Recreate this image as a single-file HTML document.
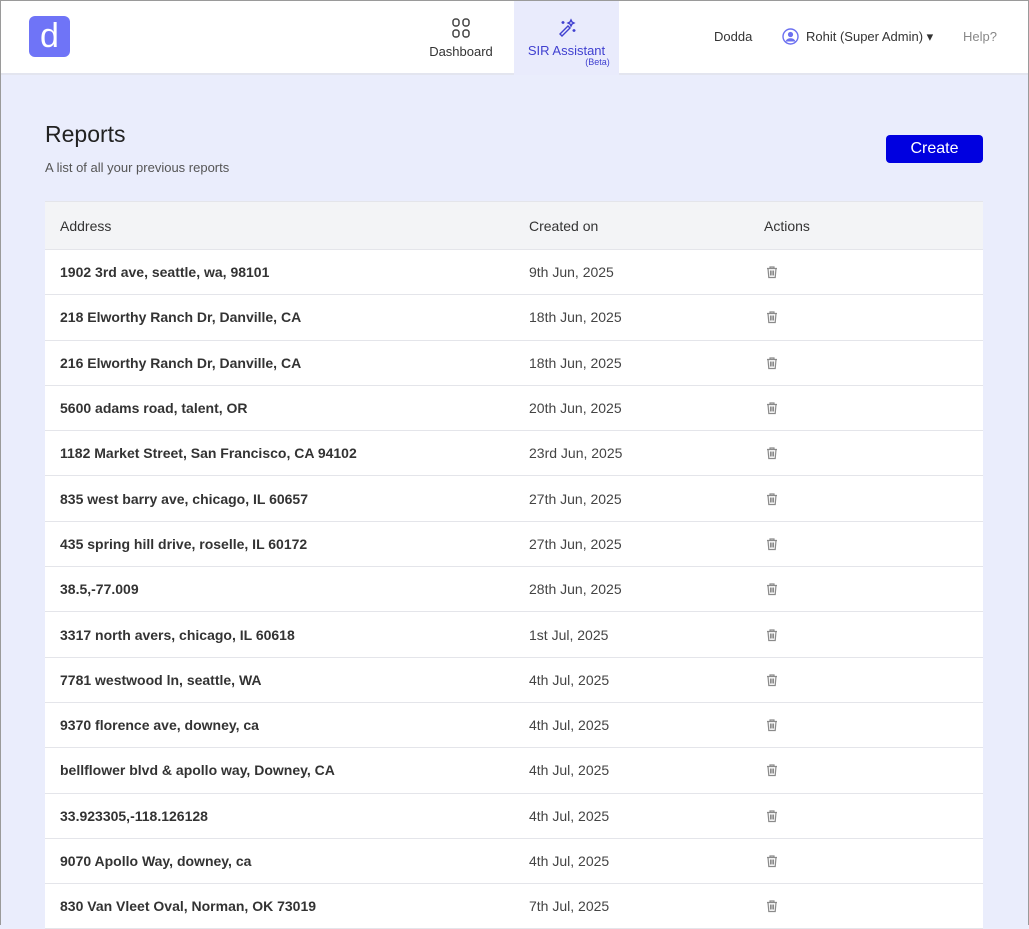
<!DOCTYPE html>
<html><head><meta charset="utf-8"><style>
*{box-sizing:border-box;margin:0;padding:0}
body{width:1029px;height:925px;overflow:hidden;background:#eaedfc;font-family:"Liberation Sans",sans-serif;color:#2a2a2a;position:relative}
.frame{position:absolute;inset:0;border:1px solid #9a9a9a;border-bottom:none;pointer-events:none;z-index:9}
.nav{position:absolute;left:0;top:0;width:1029px;height:75px;background:#fff;border-bottom:2px solid #e3e5ef}
.logo{position:absolute;left:29px;top:16px;width:41px;height:41px;background:#6f74f7;border-radius:6px;color:#fff;font-size:34px;text-align:center;line-height:40px}
.tab{position:absolute;top:0;height:75px;text-align:center;font-size:13px}
.r{position:absolute;top:29px;font-size:13px}
h1{position:absolute;left:45px;top:121px;font-size:23px;font-weight:normal;color:#222}
.sub{position:absolute;left:45px;top:160px;font-size:13px;color:#555}
.btn{position:absolute;left:886px;top:135px;width:97px;height:28px;background:#0000e0;border-radius:4px;color:#fff;font-size:16px;text-align:center;line-height:28px}
table{position:absolute;left:45px;top:201px;width:938px;border-collapse:collapse;font-size:14px;table-layout:fixed}
th{height:48px;background:#f3f4f6;text-align:left;font-weight:normal;color:#333;border:1px solid #e4e5ea;border-left:none;border-right:none}
td{height:45.3px;background:#fff;border-bottom:1px solid #e4e5ea}
th:first-child,td:first-child{padding-left:15px;width:484px}
th:nth-child(2),td:nth-child(2){width:235px}
td:first-child{font-weight:bold;color:#333}
td:nth-child(2){color:#444}
td:nth-child(3){padding-left:1px}
td svg{display:block}
</style></head><body>
<svg width="0" height="0" style="position:absolute"><defs><symbol id="t" viewBox="0 0 14 14"><path d="M2 3.5h10M5 3.5V2h4v1.5M3 3.5l.8 9h6.4l.8-9M5.5 5.5v5M7 5.5v5M8.5 5.5v5" fill="none" stroke="#8a8a8a" stroke-width="1.2"/></symbol></defs></svg>
<div class="frame"></div>
<div class="nav">
<div class="logo">d</div>
<div class="tab" style="left:420px;width:82px;color:#333">
<svg style="margin-top:17px" width="20" height="22" viewBox="0 0 20 22" fill="none" stroke="#444" stroke-width="1.5"><rect x="2" y="2" width="6" height="7" rx="2.5"/><rect x="12" y="2" width="6" height="7" rx="2.5"/><rect x="2" y="13" width="6" height="7" rx="2.5"/><rect x="12" y="13" width="6" height="7" rx="2.5"/></svg>
<div style="margin-top:2px">Dashboard</div></div>
<div class="tab" style="left:514px;width:105px;background:#e9ebfc;color:#4040d0">
<svg style="margin-top:18px" width="20" height="20" viewBox="0 0 20 20" fill="none" stroke="#4040d0" stroke-width="1.4"><path d="M3 16l8-8 2 2-8 8z"/><path d="M14 2l1 2 2 1-2 1-1 2-1-2-2-1 2-1z"/><path d="M6 3v3M4.5 4.5h3M17 11v3M15.5 12.5h3"/></svg>
<div style="margin-top:2px">SIR Assistant</div><div style="font-size:9px;margin-left:62px;margin-top:-1px">(Beta)</div></div>
<div class="r" style="left:714px;color:#333">Dodda</div>
<svg style="position:absolute;left:782px;top:28px" width="17" height="17" viewBox="0 0 17 17"><circle cx="8.5" cy="8.5" r="7.5" fill="none" stroke="#6c70f0" stroke-width="1.4"/><circle cx="8.5" cy="6.5" r="2.6" fill="#6c70f0"/><path d="M3.5 13.5c1-2.5 3-3.2 5-3.2s4 .7 5 3.2" fill="#6c70f0"/></svg>
<div class="r" style="left:806px;color:#333">Rohit (Super Admin) ▾</div>
<div class="r" style="left:963px;color:#888">Help?</div>
</div>
<h1>Reports</h1>
<div class="sub">A list of all your previous reports</div>
<div class="btn">Create</div>
<table>
<tr><th>Address</th><th>Created on</th><th>Actions</th></tr>
<tr><td>1902 3rd ave, seattle, wa, 98101</td><td>9th Jun, 2025</td><td><svg width="14" height="14"><use href="#t"/></svg></td></tr>
<tr><td>218 Elworthy Ranch Dr, Danville, CA</td><td>18th Jun, 2025</td><td><svg width="14" height="14"><use href="#t"/></svg></td></tr>
<tr><td>216 Elworthy Ranch Dr, Danville, CA</td><td>18th Jun, 2025</td><td><svg width="14" height="14"><use href="#t"/></svg></td></tr>
<tr><td>5600 adams road, talent, OR</td><td>20th Jun, 2025</td><td><svg width="14" height="14"><use href="#t"/></svg></td></tr>
<tr><td>1182 Market Street, San Francisco, CA 94102</td><td>23rd Jun, 2025</td><td><svg width="14" height="14"><use href="#t"/></svg></td></tr>
<tr><td>835 west barry ave, chicago, IL 60657</td><td>27th Jun, 2025</td><td><svg width="14" height="14"><use href="#t"/></svg></td></tr>
<tr><td>435 spring hill drive, roselle, IL 60172</td><td>27th Jun, 2025</td><td><svg width="14" height="14"><use href="#t"/></svg></td></tr>
<tr><td>38.5,-77.009</td><td>28th Jun, 2025</td><td><svg width="14" height="14"><use href="#t"/></svg></td></tr>
<tr><td>3317 north avers, chicago, IL 60618</td><td>1st Jul, 2025</td><td><svg width="14" height="14"><use href="#t"/></svg></td></tr>
<tr><td>7781 westwood ln, seattle, WA</td><td>4th Jul, 2025</td><td><svg width="14" height="14"><use href="#t"/></svg></td></tr>
<tr><td>9370 florence ave, downey, ca</td><td>4th Jul, 2025</td><td><svg width="14" height="14"><use href="#t"/></svg></td></tr>
<tr><td>bellflower blvd &amp; apollo way, Downey, CA</td><td>4th Jul, 2025</td><td><svg width="14" height="14"><use href="#t"/></svg></td></tr>
<tr><td>33.923305,-118.126128</td><td>4th Jul, 2025</td><td><svg width="14" height="14"><use href="#t"/></svg></td></tr>
<tr><td>9070 Apollo Way, downey, ca</td><td>4th Jul, 2025</td><td><svg width="14" height="14"><use href="#t"/></svg></td></tr>
<tr><td>830 Van Vleet Oval, Norman, OK 73019</td><td>7th Jul, 2025</td><td><svg width="14" height="14"><use href="#t"/></svg></td></tr>
</table>
<style>td:nth-child(3) svg{margin-left:0}</style>
</body></html>
